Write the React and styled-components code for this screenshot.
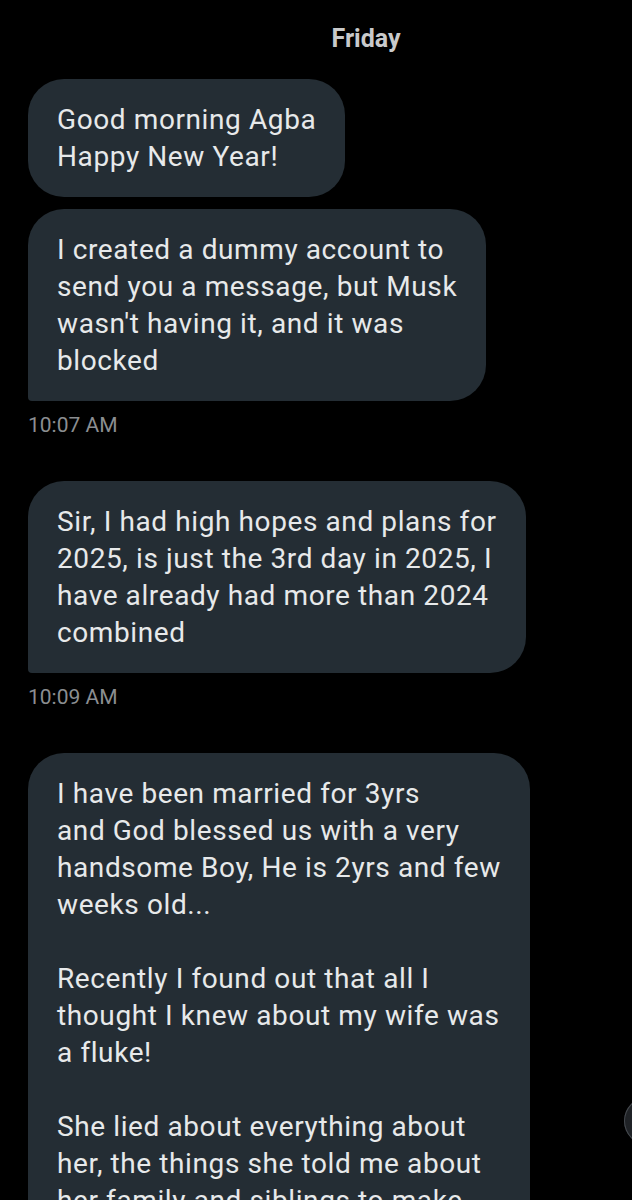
import React from "react";
import styled, { createGlobalStyle } from "styled-components";

const GlobalStyle = createGlobalStyle`
  html, body {
    margin: 0;
    padding: 0;
    background: #000000;
  }
  body {
    font-family: Roboto, "Noto Sans", Arial, sans-serif;
  }
`;

const Screen = styled.div`
  position: relative;
  width: 632px;
  height: 1200px;
  overflow: hidden;
  background: #000000;
  display: flex;
  flex-direction: column;
`;

const TopRule = styled.div`
  height: 2px;
  margin-left: 24px;
  background: #2a2c2e;
`;

const DateLabel = styled.div`
  display: flex;
  justify-content: center;
  padding-left: 100px;
  margin-top: 24px;
  height: 32px;
  align-items: center;
  font-family: Roboto, sans-serif;
  font-weight: 700;
  font-size: 25px;
  color: #c9cacb;
`;

const Thread = styled.div`
  display: flex;
  flex-direction: column;
  padding: 26px 28px 0;
`;

const Group = styled.div`
  display: flex;
  flex-direction: column;
  align-items: flex-start;
  gap: 12px;
  margin-bottom: 44px;
`;

const Bubble = styled.div`
  box-sizing: border-box;
  background: #242d34;
  color: #e7e9ea;
  font-family: Roboto, sans-serif;
  font-size: 28px;
  letter-spacing: 0.6px;
  line-height: 37px;
  padding: 22px 29px;
  border-radius: 36px;
  border-bottom-left-radius: ${(p) => (p.$last ? "4px" : "36px")};
  white-space: pre-line;
  width: fit-content;
`;

const Time = styled.div`
  font-family: Roboto, sans-serif;
  font-size: 21px;
  line-height: 24px;
  color: #8b8e91;
`;

const ScrollButton = styled.div`
  position: absolute;
  left: 624px;
  top: 1097px;
  width: 48px;
  height: 48px;
  border-radius: 50%;
  background: #1f2226;
  box-shadow: inset 0 0 0 1px #45494e;
`;

const groups = [
  {
    time: "10:07 AM",
    messages: [
      "Good morning Agba\nHappy New Year!",
      "I created a dummy account to\nsend you a message, but Musk\nwasn't having it, and it was\nblocked",
    ],
  },
  {
    time: "10:09 AM",
    messages: [
      "Sir, I had high hopes and plans for\n2025, is just the 3rd day in 2025, I\nhave already had more than 2024\ncombined",
    ],
  },
  {
    time: null,
    messages: [
      "I have been married for 3yrs\nand God blessed us with a very\nhandsome Boy, He is 2yrs and few\nweeks old...\n\u00a0\nRecently I found out that all I\nthought I knew about my wife was\na fluke!\n\u00a0\nShe lied about everything about\nher, the things she told me about\nher family and siblings to make",
    ],
  },
];

export default function App() {
  return (
    <>
      <GlobalStyle />
      <Screen>
        <TopRule />
        <DateLabel>Friday</DateLabel>
        <Thread>
          {groups.map((g, gi) => (
            <Group key={gi}>
              {g.messages.map((m, mi) => (
                <Bubble key={mi} $last={g.time && mi === g.messages.length - 1}>
                  {m}
                </Bubble>
              ))}
              {g.time && <Time>{g.time}</Time>}
            </Group>
          ))}
        </Thread>
        <ScrollButton />
      </Screen>
    </>
  );
}
